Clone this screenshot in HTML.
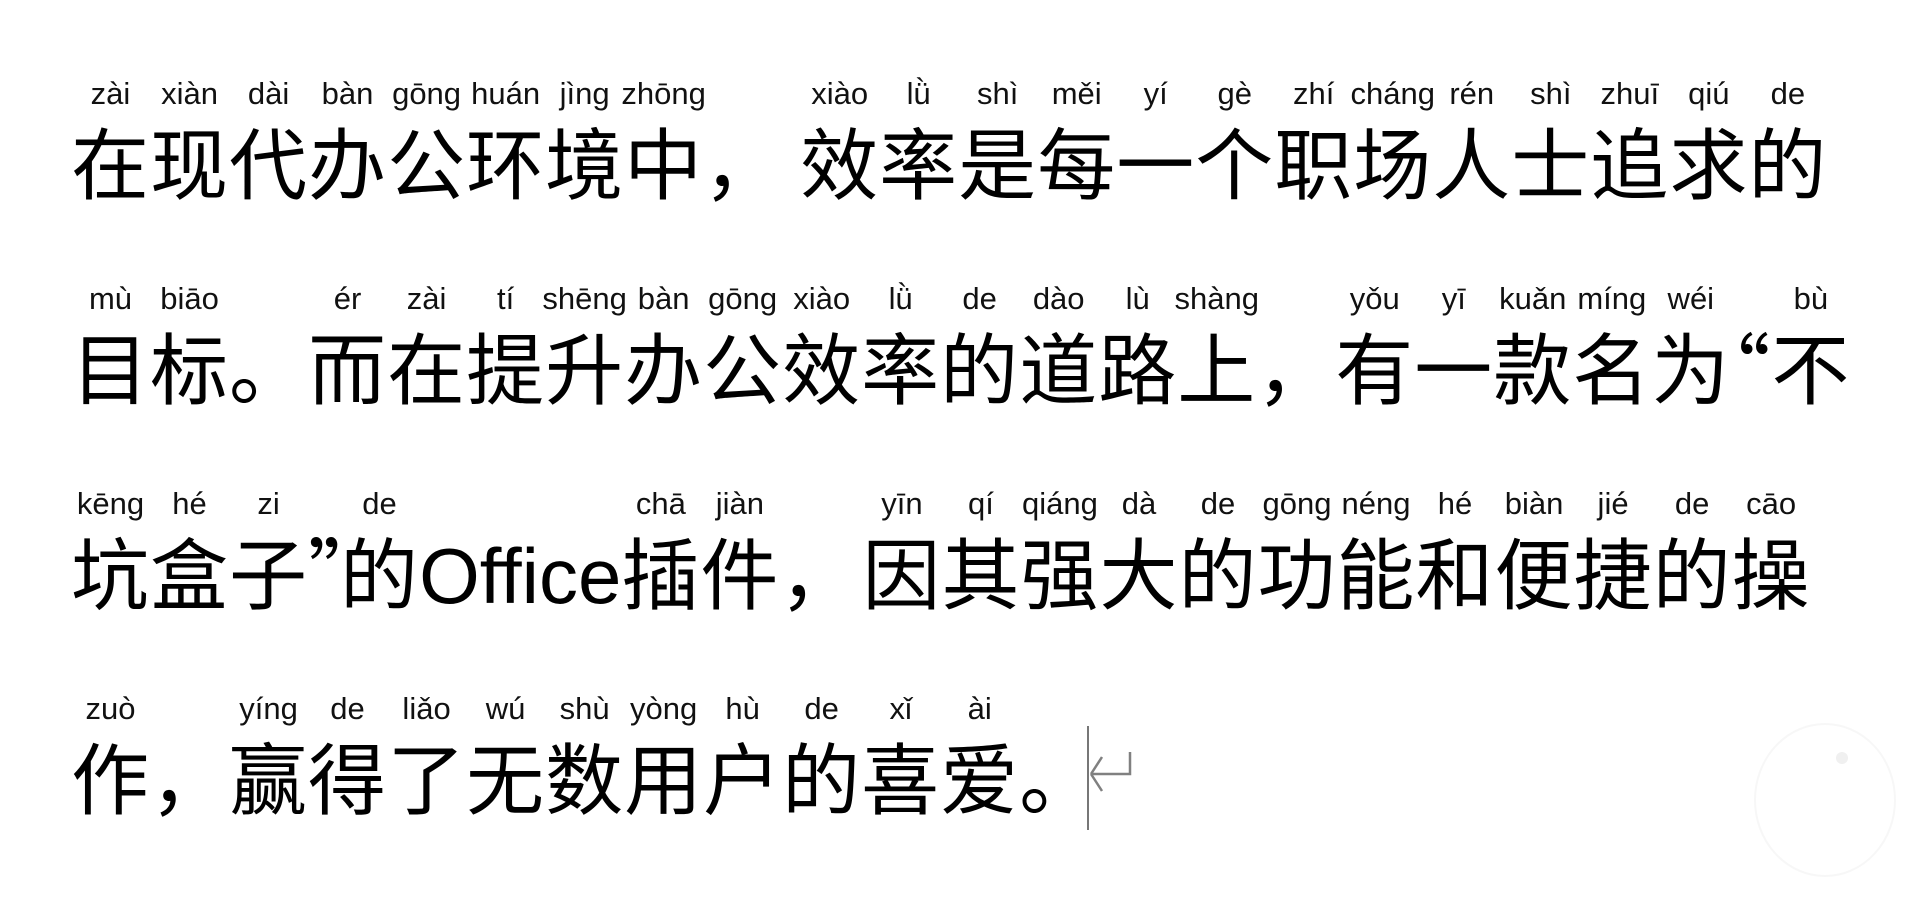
<!DOCTYPE html>
<html><head><meta charset="utf-8"><style>
html,body{margin:0;padding:0;background:#fff;width:1920px;height:897px;overflow:hidden}
.line{position:absolute;left:71px;height:78px;white-space:nowrap;font-family:"Noto Sans CJK SC","WenQuanYi Zen Hei",sans-serif;font-size:78px;line-height:78px;color:#000;letter-spacing:1px}
.c{display:inline-block;position:relative}
.c i{position:absolute;left:50%;bottom:100%;margin-bottom:12px;transform:translateX(-50%);font-style:normal;font-family:"Liberation Sans","DejaVu Sans",sans-serif;font-size:31px;line-height:31px;color:#111;white-space:nowrap;letter-spacing:0}
.lat{font-family:"Liberation Sans",sans-serif;letter-spacing:0}
</style></head><body>
<div class="line" style="top:121px"><span class="c">在<i>zài</i></span><span class="c">现<i>xiàn</i></span><span class="c">代<i>dài</i></span><span class="c">办<i>bàn</i></span><span class="c">公<i>gōng</i></span><span class="c">环<i>huán</i></span><span class="c">境<i>jìng</i></span><span class="c">中<i>zhōng</i></span><span class="c" style="margin-right:18px">，</span><span class="c">效<i>xiào</i></span><span class="c">率<i>lǜ</i></span><span class="c">是<i>shì</i></span><span class="c">每<i>měi</i></span><span class="c">一<i>yí</i></span><span class="c">个<i>gè</i></span><span class="c">职<i>zhí</i></span><span class="c">场<i>cháng</i></span><span class="c">人<i>rén</i></span><span class="c">士<i>shì</i></span><span class="c">追<i>zhuī</i></span><span class="c">求<i>qiú</i></span><span class="c">的<i>de</i></span></div>
<div class="line" style="top:326px"><span class="c">目<i>mù</i></span><span class="c">标<i>biāo</i></span><span class="c">。</span><span class="c">而<i>ér</i></span><span class="c">在<i>zài</i></span><span class="c">提<i>tí</i></span><span class="c">升<i>shēng</i></span><span class="c">办<i>bàn</i></span><span class="c">公<i>gōng</i></span><span class="c">效<i>xiào</i></span><span class="c">率<i>lǜ</i></span><span class="c">的<i>de</i></span><span class="c">道<i>dào</i></span><span class="c">路<i>lù</i></span><span class="c">上<i>shàng</i></span><span class="c">，</span><span class="c">有<i>yǒu</i></span><span class="c">一<i>yī</i></span><span class="c">款<i>kuǎn</i></span><span class="c">名<i>míng</i></span><span class="c">为<i>wéi</i></span><span class="c" style="margin-left:-38px">“</span><span class="c">不<i>bù</i></span></div>
<div class="line" style="top:531px"><span class="c">坑<i>kēng</i></span><span class="c">盒<i>hé</i></span><span class="c">子<i>zi</i></span><span class="c" style="width:32px">”</span><span class="c">的<i>de</i></span><span class="c lat">Office</span><span class="c">插<i>chā</i></span><span class="c">件<i>jiàn</i></span><span class="c" style="margin-right:4px">，</span><span class="c">因<i>yīn</i></span><span class="c">其<i>qí</i></span><span class="c">强<i>qiáng</i></span><span class="c">大<i>dà</i></span><span class="c">的<i>de</i></span><span class="c">功<i>gōng</i></span><span class="c">能<i>néng</i></span><span class="c">和<i>hé</i></span><span class="c">便<i>biàn</i></span><span class="c">捷<i>jié</i></span><span class="c">的<i>de</i></span><span class="c">操<i>cāo</i></span></div>
<div class="line" style="top:736px"><span class="c">作<i>zuò</i></span><span class="c">，</span><span class="c">赢<i>yíng</i></span><span class="c">得<i>de</i></span><span class="c">了<i>liǎo</i></span><span class="c">无<i>wú</i></span><span class="c">数<i>shù</i></span><span class="c">用<i>yòng</i></span><span class="c">户<i>hù</i></span><span class="c">的<i>de</i></span><span class="c">喜<i>xǐ</i></span><span class="c">爱<i>ài</i></span><span class="c">。</span></div>
<div style="position:absolute;left:1087px;top:726px;width:2px;height:104px;background:#777"></div>
<svg style="position:absolute;left:1088px;top:748px" width="46" height="50" viewBox="0 0 46 50"><path d="M42 4 V26 H3 M3 26 L14 9 M3 26 L14 43" fill="none" stroke="#808080" stroke-width="2.5"/></svg>
<svg style="position:absolute;left:1745px;top:720px" width="160" height="160" viewBox="0 0 160 160"><ellipse cx="80" cy="80" rx="70" ry="76" fill="none" stroke="#f7f7f7" stroke-width="2"/><circle cx="97" cy="38" r="6" fill="#f0f0f0"/></svg>
</body></html>
